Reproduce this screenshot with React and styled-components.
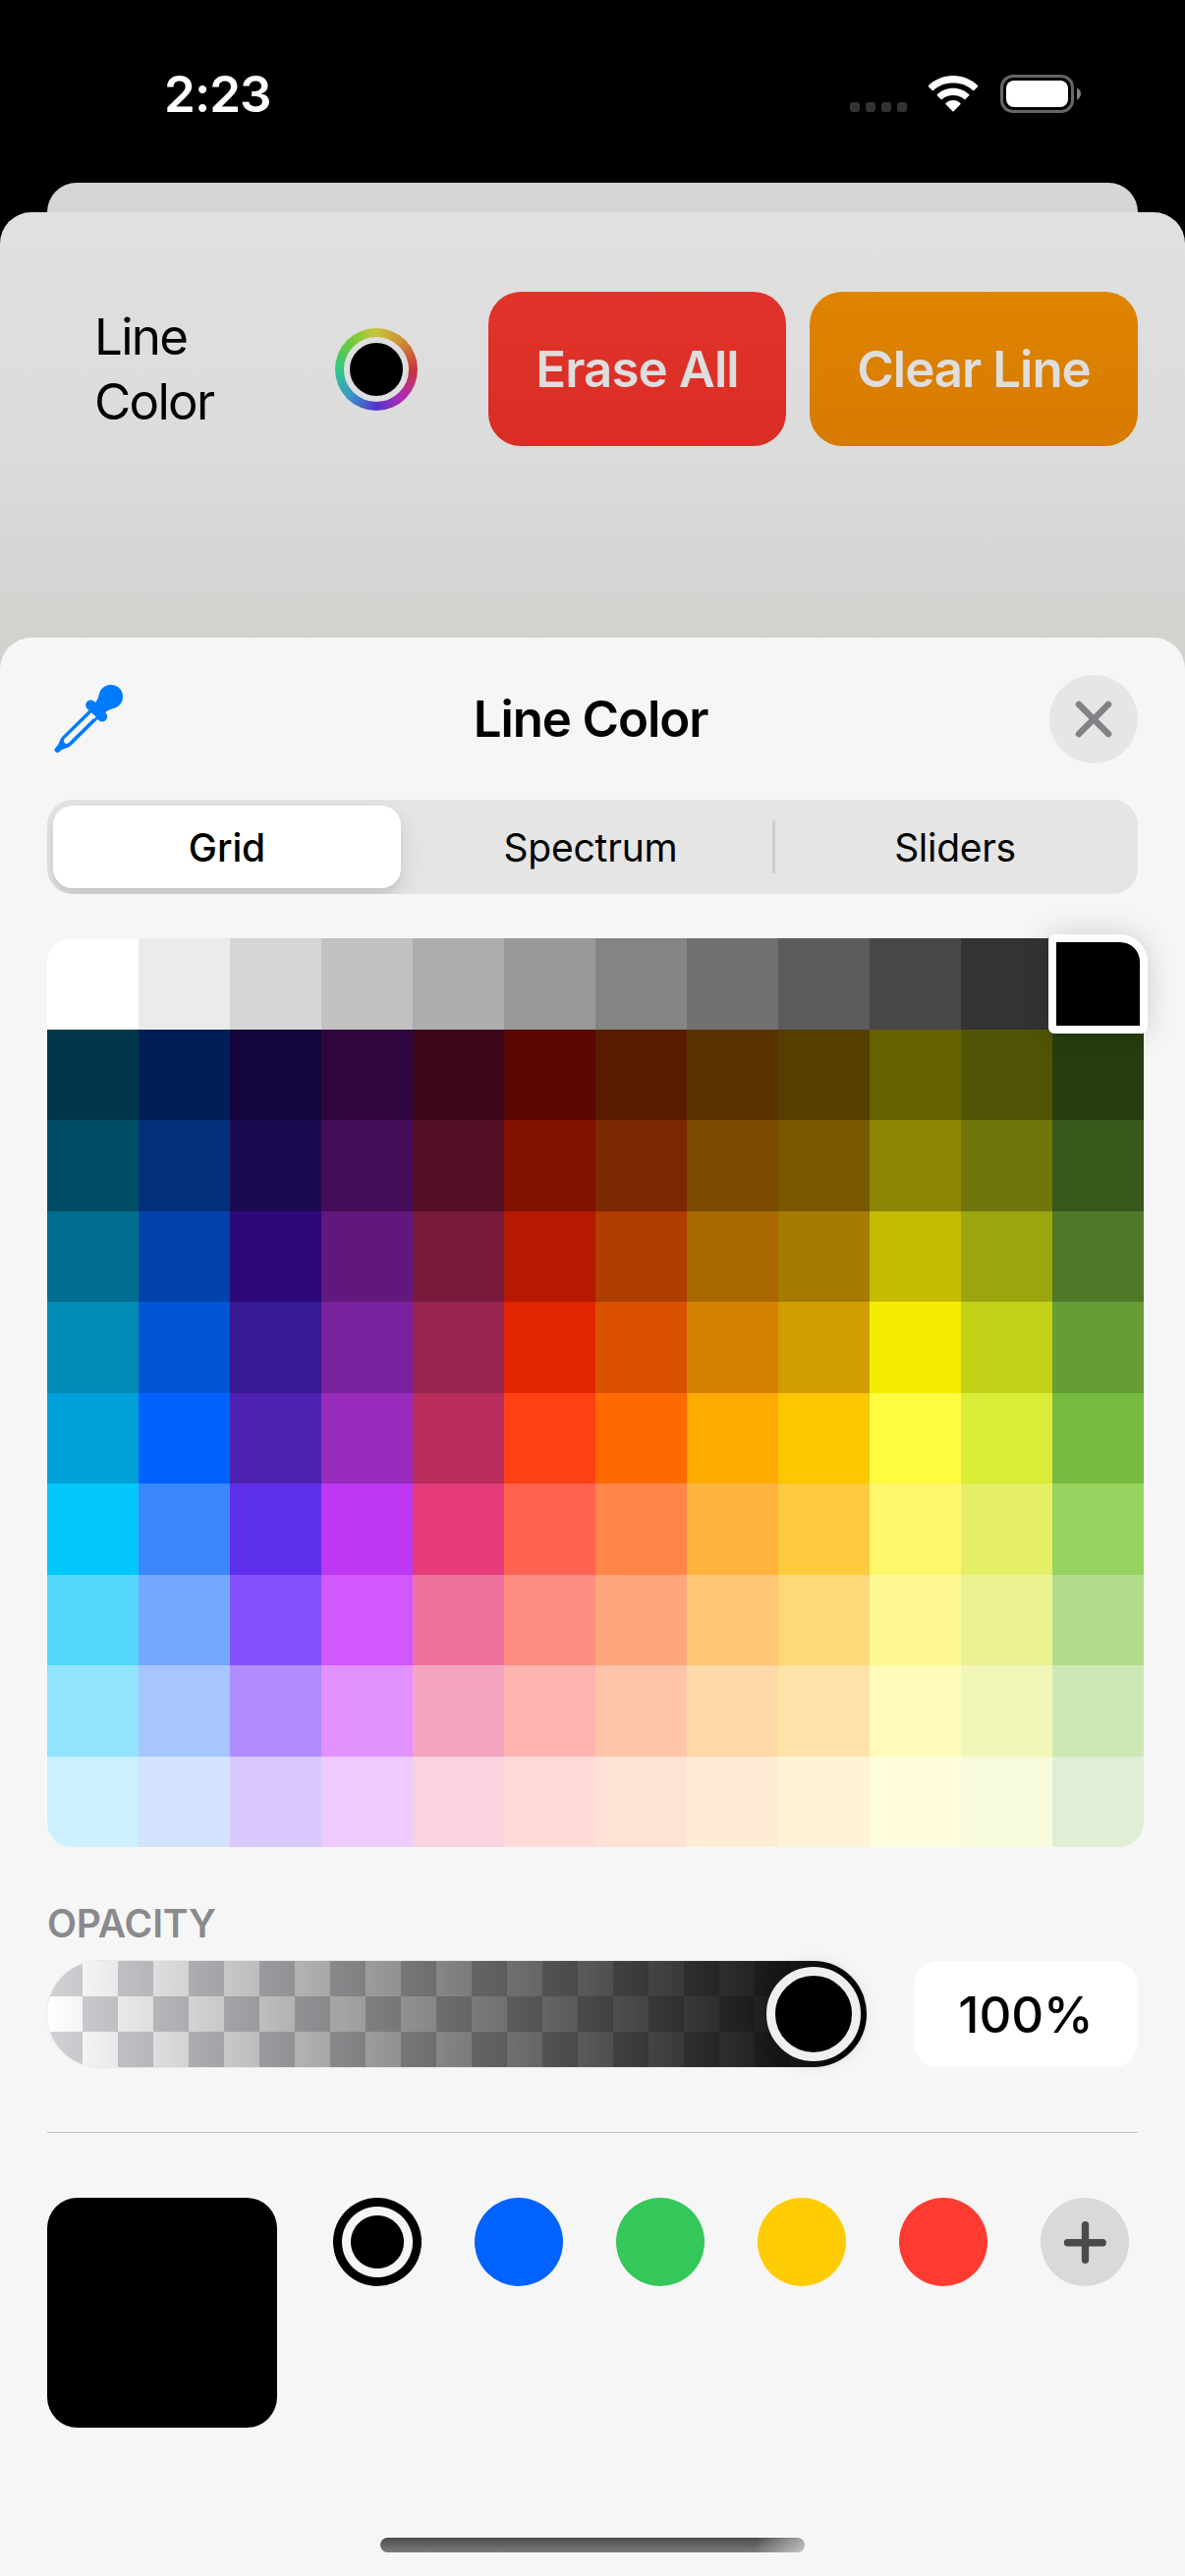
import React from 'react';
import styled, { createGlobalStyle } from 'styled-components';

const GlobalStyle = createGlobalStyle`
  * { box-sizing: border-box; }
  body { margin: 0; background: #000; }
  button { border: 0; padding: 0; margin: 0; font: inherit; color: inherit; background: none; }
`;

const Screen = styled.div`
  width: 1206px;
  height: 2622px;
  display: flex;
  flex-direction: column;
  background: #000;
  overflow: hidden;
  font-family: Inter, 'Liberation Sans', sans-serif;
  font-size: 51px;
  color: #000;
`;

const StatusBar = styled.header`
  height: 186px;
  flex: none;
  display: flex;
  justify-content: space-between;
  padding: 65px 105px 0 167px;
  color: #fff;
`;

const Time = styled.div`
  font-weight: 600;
  line-height: 62px;
  letter-spacing: -0.9px;
`;

const StatusIcons = styled.div`
  display: flex;
  align-items: flex-start;
  padding-top: 11px;
`;

const SignalDots = styled.div`
  display: flex;
  gap: 6px;
  padding-top: 28px;
  margin-right: 21px;
`;

const Dot = styled.i`
  width: 10px;
  height: 10px;
  border-radius: 3px;
  background: #333;
`;

const WifiIcon = styled.svg`
  width: 52px;
  height: 39px;
  margin-right: 21px;
`;

const BatteryIcon = styled.svg`
  width: 84px;
  height: 40px;
`;

const BackSheet = styled.div`
  flex: none;
  height: 30px;
  margin: 0 48px;
  border-radius: 31px 31px 0 0;
  background: #d6d6d6;
`;

const CanvasSheet = styled.section`
  flex: none;
  height: 493px;
  border-radius: 32px 32px 0 0;
  background: linear-gradient(#e0e0e0 0, #dcdcdc 230px, #d1d3cf 433px, #cfd1cd 100%);
`;

const Toolbar = styled.div`
  display: flex;
  align-items: center;
  padding: 81px 48px 0 96px;
`;

const ToolLabel = styled.div`
  width: 245px;
  line-height: 66px;
  letter-spacing: -1.7px;
`;

const ColorWell = styled.button`
  width: 84px;
  height: 84px;
  margin-right: 72px;
  border-radius: 50%;
  padding: 9px;
  background: conic-gradient(#c9c43c, #cc8a35 45deg, #c9353c 90deg, #b42bb0 135deg, #5535c9 180deg, #3797c9 225deg, #33c787 270deg, #6acb38 315deg, #c9c43c);
`;

const WellCore = styled.span`
  display: block;
  width: 66px;
  height: 66px;
  border-radius: 50%;
  border: 6px solid #dfdfdf;
  background: #000;
`;

const ActionButton = styled.button`
  width: ${(p) => p.$width}px;
  height: 157px;
  border-radius: 33px;
  background: linear-gradient(${(p) => p.$from}, ${(p) => p.$to});
  color: #dedede;
  font-weight: 600;
  letter-spacing: ${(p) => p.$tracking}px;
  & + & { margin-left: 24px; }
`;

const PickerSheet = styled.section`
  flex: none;
  height: 1973px;
  margin-top: -60px;
  border-radius: 32px 32px 0 0;
  background: #f6f6f6;
  padding: 38px 48px 0;
  display: flex;
  flex-direction: column;
  position: relative;
`;

const PickerHeader = styled.div`
  display: flex;
  align-items: center;
  justify-content: space-between;
  height: 90px;
`;

const Side = styled.div`
  width: 90px;
  padding-left: 7px;
  display: flex;
`;

const Dropper = styled.svg`
  width: 70px;
  height: 70px;
  overflow: visible;
`;

const Title = styled.h1`
  margin: 0;
  padding-right: 4px;
  font-size: 51px;
  line-height: 62px;
  font-weight: 600;
  letter-spacing: -1.1px;
`;

const CloseButton = styled.button`
  width: 90px;
  height: 90px;
  border-radius: 50%;
  background: #e6e6e6;
  display: grid;
  place-items: center;
`;

const Segments = styled.div`
  height: 96px;
  margin-top: 37px;
  border-radius: 26px;
  background: #e5e5e5;
  padding: 6px;
  display: flex;
  align-items: center;
  overflow: hidden;
`;

const Segment = styled.button`
  flex: none;
  width: ${(p) => p.$width}px;
  height: 84px;
  border-radius: 20px;
  font-size: 39px;
  font-weight: ${(p) => (p.$active ? 500 : 400)};
  letter-spacing: ${(p) => p.$tracking}px;
  background: ${(p) => (p.$active ? '#fff' : 'transparent')};
  box-shadow: ${(p) => (p.$active ? '0 9px 24px rgba(0,0,0,.12), 0 6px 4px rgba(0,0,0,.04)' : 'none')};
  &:first-child { margin-right: 8px; }
  &:last-child { padding-left: 3px; }
`;

const SegmentDivider = styled.i`
  flex: none;
  width: 3px;
  height: 54px;
  border-radius: 2px;
  background: #cfcfd1;
`;

const GridFrame = styled.div`
  margin-top: 45px;
  width: 1116px;
  height: 925px;
  position: relative;
`;

const Swatches = styled.div`
  width: 1116px;
  height: 925px;
  display: grid;
  grid-template-columns: repeat(12, 93px);
  grid-template-rows: repeat(10, 92.5px);
  border-radius: 25px;
  overflow: hidden;
`;

const Swatch = styled.div`
  background: #${(p) => p.$color};
`;

const Selection = styled.div`
  position: absolute;
  top: -4px;
  right: -4px;
  width: 101px;
  height: 101px;
  border: 8px solid #fff;
  border-radius: 6px 28px 6px 6px;
  background: #000;
  box-shadow: 0 0 30px rgba(0,0,0,.16);
`;

const SectionLabel = styled.div`
  margin-top: 54px;
  height: 48px;
  line-height: 48px;
  font-size: 39px;
  font-weight: 600;
  color: #8a8a8e;
  letter-spacing: -0.1px;
`;

const OpacityRow = styled.div`
  margin-top: 14px;
  display: flex;
  justify-content: space-between;
`;

const OpacityTrack = styled.div`
  width: 834px;
  height: 108px;
  border-radius: 54px;
  padding: 6px;
  display: flex;
  justify-content: flex-end;
  background:
    linear-gradient(90deg, rgba(0,0,0,0), #000),
    conic-gradient(#fff 90deg, #d1d1d6 0 180deg, #fff 0 270deg, #d1d1d6 0) 0 0 / 72px 72px;
  box-shadow: 0 0 0 1px rgba(0,0,0,.06);
`;

const Thumb = styled.div`
  width: 96px;
  height: 96px;
  border-radius: 50%;
  background: #000;
  border: 9px solid #efefef;
  box-shadow: 0 0 18px rgba(0,0,0,.18);
`;

const OpacityValue = styled.div`
  width: 228px;
  height: 108px;
  border-radius: 25px;
  background: #fff;
  font-weight: 500;
  letter-spacing: ${(p) => p.$tracking}px;
  display: flex;
  align-items: center;
  justify-content: center;
`;

const Rule = styled.hr`
  width: 1110px;
  height: 1px;
  border: 0;
  margin: 66px 0 0;
  background: #c3c3c4;
`;

const SavedRow = styled.div`
  margin-top: 66px;
  display: flex;
`;

const CurrentColor = styled.div`
  width: 234px;
  height: 234px;
  border-radius: 31px;
  background: #000;
`;

const SavedColors = styled.div`
  display: flex;
  gap: 54px;
  margin-left: 57px;
`;

const SavedColor = styled.button`
  width: 90px;
  height: 90px;
  border-radius: 50%;
  display: grid;
  place-items: center;
  background: ${(p) =>
    p.$selected
      ? `radial-gradient(circle, ${p.$color} 26.5px, #f6f6f6 27.5px 35.5px, ${p.$color} 36.5px)`
      : p.$color};
`;

const HomeIndicator = styled.div`
  width: 432px;
  height: 15px;
  margin: 112px auto 0;
  border-radius: 8px;
  background:
    linear-gradient(100deg, transparent 88%, rgba(255,255,255,.55)),
    linear-gradient(#4b4b4b, #7b7b7b);
`;

const GRID = [
  'FFFFFF EBEBEB D6D6D6 C2C2C2 ADADAD 999999 858585 707070 5C5C5C 474747 333333 000000',
  '00374A 011D57 11053B 2E063D 3C071B 5C0701 5A1C00 583300 563D00 666100 4F5504 263E0F',
  '004D65 012F7B 1A0A52 450D59 551029 831100 7B2900 7A4A00 785800 8D8602 6F760A 38571A',
  '016E8F 0042A9 2C0977 61187C 791A3D B51A00 AD3E00 A96800 A67B01 C4BC00 9BA50E 4E7A27',
  '008CB4 0056D6 371A94 7A219E 99244F E22400 DA5100 D38301 D19D01 F5EC00 C3D117 669D34',
  '00A1D8 0061FE 4D22B2 982ABC B92D5D FF4015 FF6A00 FFAB01 FDC700 FEFB41 D9EC37 76BB40',
  '01C7FC 3A87FE 5E30EB BE38F3 E63B7A FF6250 FF8648 FEB43F FECB3E FFF76B E4EF65 96D35F',
  '52D6FC 74A7FF 864FFE D357FE EE719E FF8C82 FFA57D FFC777 FFD977 FFF994 EAF28F B1DD8B',
  '93E3FD A7C6FF B18CFE E292FE F4A4C0 FFB5AF FFC5AB FFD9A8 FEE4A8 FFFBB9 F2F7B7 CDE8B5',
  'CBF0FF D3E2FF D9C9FE EFCAFF F9D3E0 FFDBD8 FFE2D6 FFECD4 FFF2D5 FEFCDD F7FADB DFEED4',
].flatMap((row) => row.split(' '));

const SAVED = [
  { color: '#000000', selected: true },
  { color: '#0062ff' },
  { color: '#34c75a' },
  { color: '#ffcc04' },
  { color: '#ff3b31' },
];

export default function App() {
  return (
    <Screen>
      <GlobalStyle />
      <StatusBar>
        <Time>2:23</Time>
        <StatusIcons>
          <SignalDots>
            <Dot /><Dot /><Dot /><Dot />
          </SignalDots>
          <WifiIcon viewBox="0 0 52 39" fill="#fff">
            <path d="M26 1C35.8 1 44.7 4.8 51 11.1Q51.5 11.7 51 12.2L47.3 16Q46.7 16.6 46.1 16C40.8 11.1 33.7 8.6 26 8.6S11.2 11.1 5.9 16Q5.3 16.6 4.7 16L1 12.2Q.5 11.7 1 11.1C7.3 4.8 16.2 1 26 1Z" />
            <path d="M26 13.8C32.3 13.8 38 16.2 42.2 20.1Q42.8 20.7 42.2 21.3L38.5 25Q37.9 25.6 37.3 25C34.3 22.3 30.3 20.9 26 20.9S17.7 22.3 14.7 25Q14.1 25.6 13.5 25L9.8 21.3Q9.2 20.7 9.8 20.1C14 16.2 19.7 13.8 26 13.8Z" />
            <path d="M26 26.1C28.8 26.1 31.4 27.2 33.4 29Q34 29.6 33.4 30.2L26.6 37.3Q26 37.9 25.4 37.3L18.6 30.2Q18 29.6 18.6 29C20.6 27.2 23.2 26.1 26 26.1Z" />
          </WifiIcon>
          <BatteryIcon viewBox="0 0 84 40">
            <rect x="2.5" y="1.5" width="72" height="36" rx="11.5" fill="none" stroke="#666" strokeWidth="3" />
            <rect x="7" y="6" width="63" height="27" rx="8" fill="#fff" />
            <path d="M79 13.5C81.5 14.6 83 16.8 83 19.5S81.5 24.4 79 25.5Z" fill="#808080" />
          </BatteryIcon>
        </StatusIcons>
      </StatusBar>

      <BackSheet />
      <CanvasSheet>
        <Toolbar>
          <ToolLabel>Line<br />Color</ToolLabel>
          <ColorWell aria-label="Line Color"><WellCore /></ColorWell>
          <ActionButton $width={303} $from="#e0342b" $to="#d92d25" $tracking={-0.9}>Erase All</ActionButton>
          <ActionButton $width={334} $from="#df8400" $to="#d67b00" $tracking={-1}>Clear Line</ActionButton>
        </Toolbar>
      </CanvasSheet>

      <PickerSheet>
        <PickerHeader>
          <Side>
            <Dropper viewBox="75 83 210 210" fill="#007aff">
              <circle cx="248.5" cy="119.5" r="36.5" />
              <path d="M213.5 109C211 121 207 131 200 139L230 169C237 162 247 158 259 154.500Z" />
              <path d="M187 145L222 180" fill="none" stroke="#007aff" strokeWidth="31" strokeLinecap="round" />
              <path fillRule="evenodd" d="M182 160L100 241C93 249 92 257 88 265L77 279Q75 283 78 286L83 290Q86 292 89 289L100 281C110 276 119 276 127 268L209 187ZM188 169L107 248Q103 256 107 260Q111 265 119 261L201 180Z" />
              <path d="M183 174L189 168L203 181L197 187Z" fill="#f6f6f6" />
            </Dropper>
          </Side>
          <Title>Line Color</Title>
          <CloseButton aria-label="Close">
            <svg width="38" height="38" viewBox="0 0 38 38" stroke="#828286" strokeWidth="6.6" strokeLinecap="round">
              <path d="M4 4L34 34M34 4L4 34" />
            </svg>
          </CloseButton>
        </PickerHeader>

        <Segments>
          <Segment $active $width={354} $tracking={-0.1}>Grid</Segment>
          <Segment $width={370} $tracking={-0.2}>Spectrum</Segment>
          <SegmentDivider />
          <Segment $width={363} $tracking={-0.3}>Sliders</Segment>
        </Segments>

        <GridFrame>
          <Swatches>
            {GRID.map((c, i) => <Swatch key={i} $color={c} />)}
          </Swatches>
          <Selection />
        </GridFrame>

        <SectionLabel>OPACITY</SectionLabel>
        <OpacityRow>
          <OpacityTrack><Thumb /></OpacityTrack>
          <OpacityValue $tracking={-0.1}>100%</OpacityValue>
        </OpacityRow>

        <Rule />

        <SavedRow>
          <CurrentColor />
          <SavedColors>
            {SAVED.map((s) => (
              <SavedColor key={s.color} $color={s.color} $selected={s.selected} />
            ))}
            <SavedColor $color="#d9d9d9" aria-label="Add">
              <svg width="44" height="44" viewBox="0 0 44 44" stroke="#4a4a4a" strokeWidth="7.4" strokeLinecap="round">
                <path d="M22.5 4.7V40.3M4.5 22.8H40.2" />
              </svg>
            </SavedColor>
          </SavedColors>
        </SavedRow>

        <HomeIndicator />
      </PickerSheet>
    </Screen>
  );
}
